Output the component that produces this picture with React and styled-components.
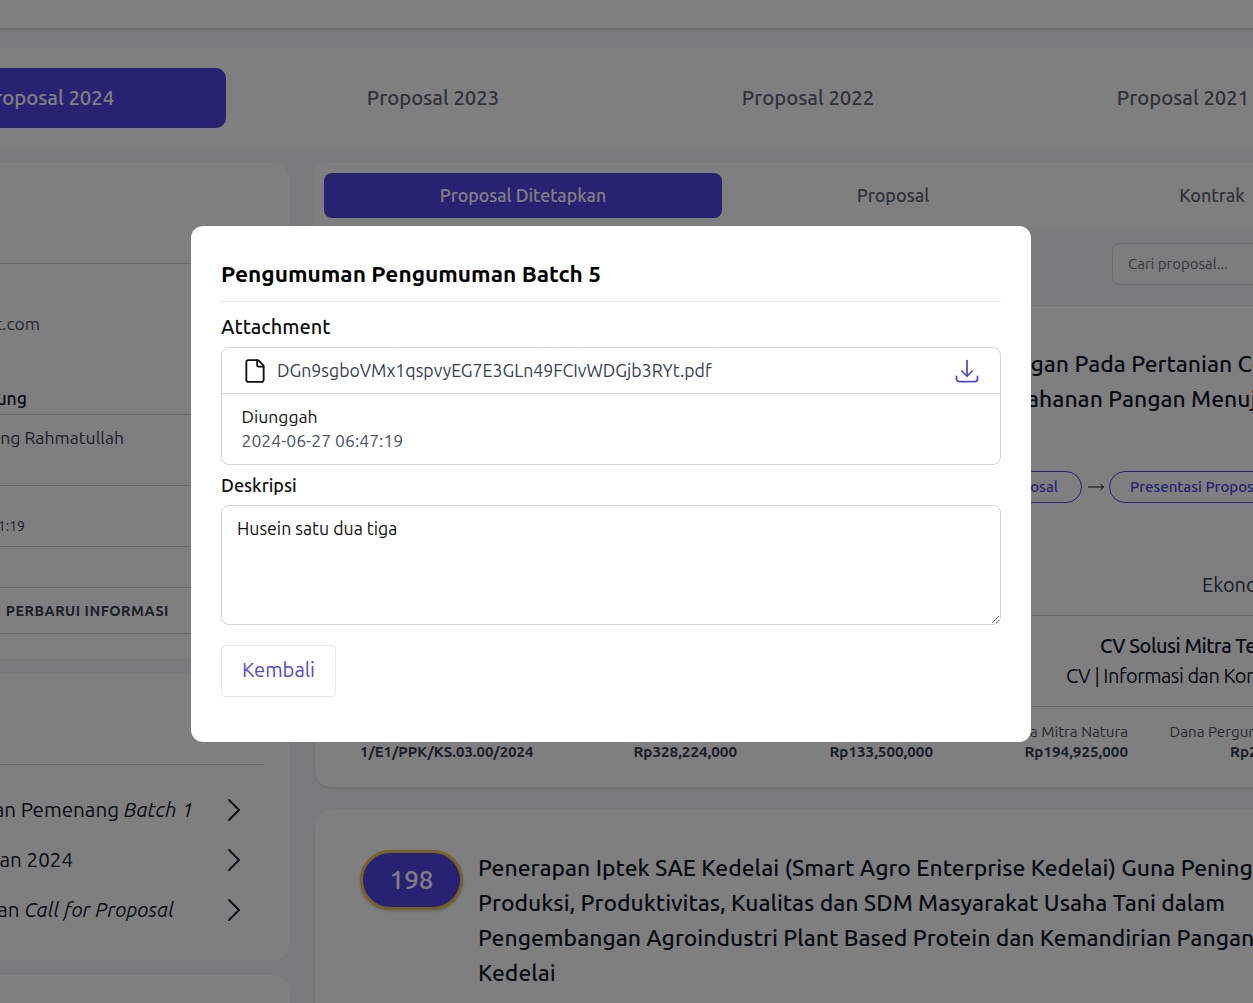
import React from "react";
import styled, { createGlobalStyle } from "styled-components";
import { File, ChevronRight, MoveRight } from "lucide-react";

const GlobalStyle = createGlobalStyle`
  * { box-sizing: border-box; }
  body {
    margin: 0;
    overflow: hidden;
    font-family: "Ubuntu", "Noto Sans", sans-serif;
    color: #111827;
  }
`;

const Viewport = styled.div`
  position: relative;
  width: 100vw;
  height: 100vh;
  overflow: hidden;
  background: #f3f4f6;
`;

const Page = styled.div`
  width: 1600px;
  margin-left: -150px;
`;

const TopBar = styled.div`
  height: 29px;
  background: #fff;
  border-bottom: 1px solid #d8d9dc;
  box-shadow: 0 1px 3px rgba(0, 0, 0, 0.1);
`;

const YearCard = styled.div`
  display: flex;
  align-items: center;
  height: 100px;
  margin-top: 19px;
  padding: 20px;
  background: #fff;
`;

const YearTab = styled.div`
  flex: none;
  display: flex;
  align-items: center;
  justify-content: center;
  width: ${(p) => (p.$active ? "356px" : "375px")};
  height: 60px;
  padding-bottom: 2px;
  margin-right: ${(p) => (p.$active ? "19.5px" : "0")};
  border-radius: 10px;
  font-size: 20.3px;
  font-weight: 500;
  background: ${(p) => (p.$active ? "#4f46e5" : "transparent")};
  color: ${(p) => (p.$active ? "#fff" : "#5f6673")};
`;

const Columns = styled.div`
  display: flex;
  gap: 25px;
  margin-top: 15px;
`;

const LeftColumn = styled.div`
  flex: none;
  display: flex;
  flex-direction: column;
  gap: 15px;
  width: 439px;
`;

const RightColumn = styled.div`
  flex: none;
  width: 1086px;
`;

const SideCard = styled.div`
  padding: 0 25px 25px 0;
  background: #fff;
  border-radius: 16px;
  min-height: ${(p) => p.$min || 0}px;
`;

const SideHeader = styled.div`
  height: ${(p) => p.$h}px;
  border-bottom: 1px solid #d1d5db;
`;

const InfoRow = styled.div`
  height: ${(p) => p.$h}px;
  padding-top: ${(p) => p.$top || 0}px;
  padding-right: ${(p) => p.$end || 0}px;
  text-align: right;
  white-space: nowrap;
  line-height: 24px;
  font-size: ${(p) => p.$size || 17.6}px;
  font-weight: ${(p) => p.$weight || 400};
  letter-spacing: ${(p) => p.$spacing || 0}px;
  color: ${(p) => p.$color || "#374151"};
  border-bottom: ${(p) => (p.$line ? "1px solid #d1d5db" : "none")};
`;

const NoticeList = styled.div`
  padding-top: 20px;
`;

const NoticeRow = styled.div`
  display: flex;
  align-items: center;
  justify-content: flex-end;
  height: 50px;
  padding-right: 10px;
  white-space: nowrap;
  font-size: 20.6px;
  font-weight: 400;
  color: #111827;
  svg {
    flex: none;
  }
`;

const NoticeText = styled.span`
  padding-right: ${(p) => p.$gap}px;
  padding-bottom: 2px;
`;

const InnerTabs = styled.div`
  display: flex;
  height: 65px;
  padding: 10px;
  background: #fff;
  border-radius: 12px 12px 0 0;
`;

const InnerTab = styled.div`
  flex: none;
  display: flex;
  align-items: center;
  justify-content: center;
  width: ${(p) => p.$w}px;
  padding-bottom: 2px;
  border-radius: 8px;
  font-size: ${(p) => (p.$active ? 17.8 : 18)}px;
  font-weight: 500;
  background: ${(p) => (p.$active ? "#4f46e5" : "transparent")};
  color: ${(p) => (p.$active ? "#fff" : "#5f6673")};
`;

const SearchBar = styled.div`
  display: flex;
  justify-content: flex-end;
  height: 78px;
  padding: 15px 38px 0 0;
  border-bottom: 1px solid #e5e7eb;
`;

const SearchInput = styled.input`
  width: 250px;
  height: 42px;
  padding: 0 15px 2px;
  font: inherit;
  font-size: 15px;
  background: #f9fafb;
  border: 1px solid #d1d5db;
  border-radius: 8px;
  &::placeholder {
    color: #6b7280;
  }
`;

const ProposalCard = styled.div`
  margin: 0 0 23px 1px;
  padding: 40px 45px 0;
  height: ${(p) => p.$h}px;
  background: #fff;
  border-radius: 16px;
  box-shadow: 0 2px 2px rgba(0, 0, 0, 0.08);
`;

const TitleRow = styled.div`
  display: flex;
  gap: 15px;
`;

const Badge = styled.div`
  flex: none;
  display: flex;
  align-items: center;
  justify-content: center;
  width: 103px;
  height: 60px;
  padding-bottom: 2px;
  border: 3px solid #eac64a;
  border-radius: 30px;
  background: #4f46e5;
  color: #fff;
  font-size: 26px;
  font-weight: 500;
  box-shadow: 0 1px 3px rgba(0, 0, 0, 0.25);
`;

const Title = styled.div`
  font-size: 22.9px;
  font-weight: 500;
  line-height: 35px;
  white-space: nowrap;
  color: #111827;
`;

const TitleLine = styled.div`
  padding-left: ${(p) => p.$indent || 0}px;
`;

const StepRow = styled.div`
  display: flex;
  align-items: center;
  gap: 4.5px;
  height: 32px;
  margin-top: 55px;
  padding-left: 118px;
`;

const StepPill = styled.div`
  flex: none;
  display: flex;
  align-items: center;
  justify-content: flex-end;
  width: ${(p) => (p.$w ? `${p.$w}px` : "auto")};
  height: 32px;
  padding: 0 23px 2px 20px;
  border: 1px solid #4f46e5;
  border-radius: 16px;
  font-size: 15px;
  font-weight: 500;
  color: #4f46e5;
`;

const TagRow = styled.div`
  height: 113px;
  padding: 69px 0 0 887px;
  border-bottom: 1px solid #d1d5db;
  margin: 0 -45px;
  font-size: 20px;
  line-height: 26px;
  color: #374151;
  white-space: nowrap;
`;

const OrgBlock = styled.div`
  height: 91px;
  padding-top: 15px;
  margin: 0 -45px;
  border-bottom: 1px solid #d1d5db;
  white-space: nowrap;
  font-size: 20px;
  letter-spacing: -0.5px;
  line-height: 30px;
  color: #111827;
`;

const OrgLine = styled.div`
  padding-left: ${(p) => p.$left}px;
  font-weight: ${(p) => (p.$bold ? 500 : 400)};
`;

const StatGrid = styled.div`
  display: grid;
  grid-template-columns: 181px 196px 196px 195px 197px;
  padding-top: 15px;
`;

const Stat = styled.div`
  text-align: ${(p) => (p.$left ? "left" : "right")};
  white-space: nowrap;
  font-size: 15.2px;
  line-height: 20px;
  color: #4b5563;
  strong {
    display: block;
    font-size: ${(p) => (p.$left ? 14.95 : 15.2)}px;
    font-weight: 700;
    color: #374151;
  }
`;

const Overlay = styled.div`
  position: absolute;
  inset: 0;
  padding: 226px 0 0 191px;
  background: rgba(0, 0, 0, 0.5);
`;

const Modal = styled.div`
  display: flex;
  flex-direction: column;
  width: 840px;
  height: 516px;
  padding: 30px;
  background: #fff;
  border-radius: 12px;
`;

const ModalTitle = styled.h2`
  margin: 0;
  height: 46px;
  border-bottom: 1px solid #e5e7eb;
  font-size: 22.7px;
  font-weight: 700;
  line-height: 36px;
  color: #000;
`;

const SectionLabel = styled.div`
  margin-top: ${(p) => p.$top}px;
  font-size: ${(p) => p.$size}px;
  line-height: 26px;
  font-weight: 500;
  color: #111;
`;

const AttachmentBox = styled.div`
  margin-top: 7px;
  height: 118px;
  border: 1px solid #d1d5db;
  border-radius: 8px;
`;

const FileRow = styled.div`
  display: flex;
  align-items: center;
  height: 46px;
  padding: 0 19px 0 20px;
  border-bottom: 1px solid #d1d5db;
  color: #111;
`;

const FileName = styled.span`
  flex: 1;
  margin-left: 9px;
  font-size: 17.7px;
  color: #374151;
`;

const DownloadIcon = styled.svg`
  width: 28px;
  height: 28px;
  fill: none;
  stroke: #4f46e5;
  stroke-width: 1.5;
  stroke-linecap: round;
  stroke-linejoin: round;
`;

const UploadInfo = styled.div`
  padding: 10.5px 20px 0 19.5px;
  font-size: 17.6px;
  line-height: 24px;
  color: #111;
  span {
    display: block;
    color: #4b5563;
  }
`;

const DescriptionArea = styled.textarea`
  display: block;
  width: 100%;
  height: 120px;
  margin-top: 7px;
  padding: 11px 15px;
  font: inherit;
  font-size: 17.7px;
  line-height: 24px;
  color: #111;
  background: #fff;
  border: 1px solid #d1d5db;
  border-radius: 8px;
  outline: none;
`;

const BackButton = styled.button`
  align-self: flex-start;
  width: 115px;
  height: 52px;
  margin-top: 20px;
  padding: 0 0 3px 0;
  font: inherit;
  font-size: 20.2px;
  color: #4f46e5;
  background: #fff;
  border: 1px solid #e5e7eb;
  border-radius: 4px;
`;

const years = ["Proposal 2023", "Proposal 2022", "Proposal 2021"];

const notices = [
  { gap: 21, text: <>Pengumuman Pemenang <em>Batch 1</em></> },
  { gap: 141, text: <>Pengumuman 2024</> },
  { gap: 40, text: <>Pengumuman <em>Call for Proposal</em></> },
];

const stats = [
  { label: "Nomor Kontrak", value: "1/E1/PPK/KS.03.00/2024", left: true },
  { label: "Total Dana", value: "Rp328,224,000" },
  { label: "Dana Hibah", value: "Rp133,500,000" },
  { label: "Dana Mitra Natura", value: "Rp194,925,000" },
  { label: "Dana Perguruan Tinggi", value: "Rp23,500,000" },
];

export default function App() {
  return (
    <Viewport>
      <GlobalStyle />
      <Page>
        <TopBar />
        <YearCard>
          <YearTab $active>Proposal 2024</YearTab>
          {years.map((y) => (
            <YearTab key={y}>{y}</YearTab>
          ))}
        </YearCard>

        <Columns>
          <LeftColumn>
            <SideCard>
              <SideHeader $h={101} />
              <InfoRow $h={96} $top={48} $end={224} $color="#4b5563">
                info@solusimitrat.com
              </InfoRow>
              <InfoRow $h={55} $top={27} $end={237} $weight={500} $color="#111827" $line>
                Penanggung
              </InfoRow>
              <InfoRow $h={71} $top={11} $end={140} $line>
                Bambang Rahmatullah
              </InfoRow>
              <InfoRow $h={61} $top={28} $end={239} $size={14} $line>
                2024-06-27 06:41:19
              </InfoRow>
              <InfoRow $h={41} $line />
              <InfoRow $h={46} $top={11} $end={95} $size={14.4} $spacing={0.55} $weight={700} $line>
                PERBARUI INFORMASI
              </InfoRow>
            </SideCard>

            <SideCard>
              <SideHeader $h={91} />
              <NoticeList>
                {notices.map((n) => (
                  <NoticeRow key={n.gap}>
                    <NoticeText $gap={n.gap}>{n.text}</NoticeText>
                    <ChevronRight size={40} strokeWidth={1.1} />
                  </NoticeRow>
                ))}
              </NoticeList>
            </SideCard>

            <SideCard $min={200} />
          </LeftColumn>

          <RightColumn>
            <InnerTabs>
              <InnerTab $active $w={398}>Proposal Ditetapkan</InnerTab>
              <InnerTab $w={342}>Proposal</InnerTab>
              <InnerTab $w={296}>Kontrak</InnerTab>
            </InnerTabs>
            <SearchBar>
              <SearchInput placeholder="Cari proposal..." />
            </SearchBar>

            <ProposalCard $h={481}>
              <TitleRow>
                <Badge>197</Badge>
                <Title>
                  <TitleLine $indent={73}>Implementasi Teknologi Tepat Guna Perdagangan Pada Pertanian Cerdas</TitleLine>
                  <TitleLine $indent={133}>Untuk Mendukung Kemandirian dan Ketahanan Pangan Menuju Indonesia Emas</TitleLine>
                </Title>
              </TitleRow>
              <StepRow>
                <StepPill $w={604}>Seleksi Proposal</StepPill>
                <MoveRight size={18} strokeWidth={1.3} color="#111" />
                <StepPill>Presentasi Proposal</StepPill>
              </StepRow>
              <TagRow>Ekonomi</TagRow>
              <OrgBlock>
                <OrgLine $bold $left={785}>CV Solusi Mitra Teknologi</OrgLine>
                <OrgLine $left={751}>CV | Informasi dan Komunikasi</OrgLine>
              </OrgBlock>
              <StatGrid>
                {stats.map((s) => (
                  <Stat key={s.label} $left={s.left}>
                    {s.label}
                    <strong>{s.value}</strong>
                  </Stat>
                ))}
              </StatGrid>
            </ProposalCard>

            <ProposalCard $h={400}>
              <TitleRow>
                <Badge>198</Badge>
                <Title>
                  Penerapan Iptek SAE Kedelai (Smart Agro Enterprise Kedelai) Guna Peningkatan
                  <br />
                  Produksi, Produktivitas, Kualitas dan SDM Masyarakat Usaha Tani dalam
                  <br />
                  Pengembangan Agroindustri Plant Based Protein dan Kemandirian Pangan
                  <br />
                  Kedelai
                </Title>
              </TitleRow>
            </ProposalCard>
          </RightColumn>
        </Columns>
      </Page>

      <Overlay>
        <Modal>
          <ModalTitle>Pengumuman Pengumuman Batch 5</ModalTitle>
          <SectionLabel $top={12} $size={20}>Attachment</SectionLabel>
          <AttachmentBox>
            <FileRow>
              <File size={26} strokeWidth={1.7} />
              <FileName>DGn9sgboVMx1qspvyEG7E3GLn49FCIvWDGjb3RYt.pdf</FileName>
              <DownloadIcon viewBox="0 0 24 24">
                <path d="M3 16.5v2.25A2.25 2.25 0 0 0 5.25 21h13.5A2.25 2.25 0 0 0 21 18.75V16.5M16.5 12 12 16.5m0 0L7.5 12m4.5 4.5V3" />
              </DownloadIcon>
            </FileRow>
            <UploadInfo>
              Diunggah
              <span>2024-06-27 06:47:19</span>
            </UploadInfo>
          </AttachmentBox>
          <SectionLabel $top={7} $size={18}>Deskripsi</SectionLabel>
          <DescriptionArea readOnly value="Husein satu dua tiga" />
          <BackButton>Kembali</BackButton>
        </Modal>
      </Overlay>
    </Viewport>
  );
}
